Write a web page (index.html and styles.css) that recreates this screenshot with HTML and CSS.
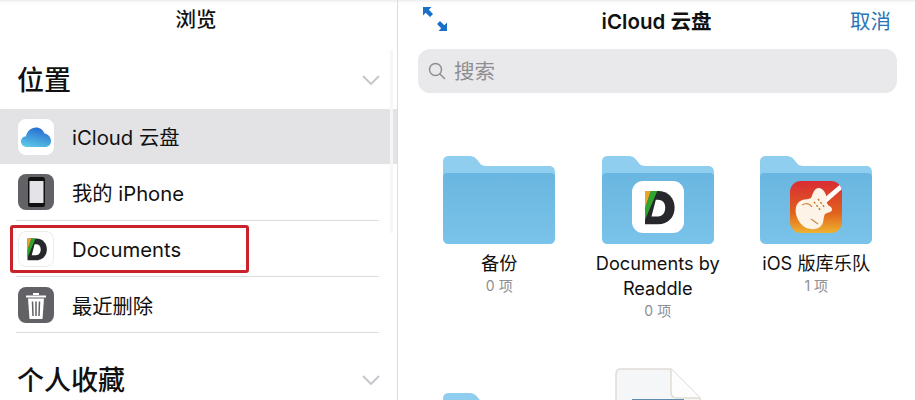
FILE: index.html
```html
<!DOCTYPE html>
<html lang="zh-CN">
<head>
    <meta charset="UTF-8">
    <title>iCloud 云盘</title>
    <link rel="stylesheet" href="styles.css">
</head>
<body>
    <svg class="defs" width="0" height="0">
        <defs>
            <linearGradient id="cloud-grad" x1="0.700" y1="0" x2="0.300" y2="1">
                <stop offset="0" stop-color="#2468cf"/>
                <stop offset="1" stop-color="#5cc6e6"/>
            </linearGradient>
            <linearGradient id="folder-front" x1="0" y1="0" x2="0" y2="1">
                <stop offset="0" stop-color="#69b6e0"/>
                <stop offset="1" stop-color="#7ac3ea"/>
            </linearGradient>
            <symbol id="folder" viewBox="0 0 112 88">
                <path d="M6 0H26C31 0 33 2 36 6C38 9 40 10 44 10H106C110 10 112 12 112 17V40H0V6C0 2 2 0 6 0Z" fill="#90cef0"/>
                <path d="M0 21C0 18 2 17 5 17H107C110 17 112 18 112 21V82C112 86 110 88 106 88H6C2 88 0 86 0 82Z" fill="url(#folder-front)"/>
            </symbol>
            <symbol id="doc-logo" viewBox="0 0 36 36">
                <path d="M9 7H18C25 7 29.500 12 29.500 18.500C29.500 25 25 30 18 30H9Z" fill="#26282b"/>
                <path d="M16.500 13H18C21 13 23 15 23 18.500C23 22 21 24.500 18 24.500H13.500Z" fill="#fff"/>
                <path d="M13 7H17.500L9 27V19Z" fill="#2ea52e"/>
                <path d="M9 7H13L9 19Z" fill="#e9a62c"/>
            </symbol>
        </defs>
    </svg>

    <div class="page">
        <aside class="sidebar">
            <header class="nav-title">浏览</header>

            <div class="section-head">
                <h2>位置</h2>
                <svg class="chevron" width="18" height="10" viewBox="0 0 18 10"><path d="M1 1L9 9L17 1"/></svg>
            </div>

            <ul class="places">
                <li class="place selected">
                    <span class="app-icon white">
                        <svg width="30" height="20" viewBox="0 0 30 20"><path d="M6 20C2.500 20 0 17.500 0 14.500C0 11.500 2.200 9.300 5 9.200C6 4 10 0.500 15 0.500C19 0.500 22 2.800 23.500 6.500C27.500 7 30 10.500 30 14C30 17.500 27.500 20 24 20Z" fill="url(#cloud-grad)"/></svg>
                    </span>
                    <span class="place-name">iCloud 云盘</span>
                </li>
                <li class="place phone">
                    <span class="app-icon grey">
                        <svg width="17" height="30" viewBox="0 0 17 30"><rect width="17" height="30" rx="2.500" fill="#111"/><rect x="1.500" y="4" width="14" height="22" fill="#e4e4e8"/></svg>
                    </span>
                    <span class="place-name">我的 iPhone</span>
                </li>
                <li class="place">
                    <span class="app-icon white outlined">
                        <svg width="36" height="36"><use href="#doc-logo"/></svg>
                    </span>
                    <span class="place-name">Documents</span>
                </li>
                <li class="place">
                    <span class="app-icon grey">
                        <svg width="20" height="27" viewBox="0 0 20 27">
                            <path d="M0 3.500H20V5.500H0ZM7 1H13V3H7Z" fill="#fff"/>
                            <path d="M2 6.500H18L16.500 27H3.500Z" fill="#fff"/>
                            <path d="M6.500 9.500L7 24M10 9.500V24M13.500 9.500L13 24" stroke="#626266" stroke-width="1.500"/>
                        </svg>
                    </span>
                    <span class="place-name">最近删除</span>
                </li>
                <li class="highlight-box"></li>
            </ul>

            <div class="section-head favourites">
                <h2>个人收藏</h2>
                <svg class="chevron" width="18" height="10" viewBox="0 0 18 10"><path d="M1 1L9 9L17 1"/></svg>
            </div>

            <span class="scrollbar"></span>
        </aside>

        <main class="content">
            <header class="topbar">
                <svg class="expand" width="26" height="26" viewBox="0 0 26 26">
                    <path d="M1 1H9.500L6.800 3.700L11 8L8 11L3.700 6.800L1 9.500Z"/>
                    <path d="M25 25H16.500L19.200 22.300L15 18L18 15L22.300 19.200L25 16.500Z"/>
                </svg>
                <span class="title">iCloud 云盘</span>
                <span class="cancel">取消</span>
            </header>

            <div class="search">
                <svg width="18" height="18" viewBox="0 0 18 18"><circle cx="7.500" cy="7.500" r="6"/><path d="M12 12L17 17"/></svg>
                <span class="search-text">搜索</span>
            </div>

            <div class="grid">
                <div class="item">
                    <svg class="folder" width="112" height="88"><use href="#folder"/></svg>
                    <div class="name">备份</div>
                    <div class="count">0 项</div>
                </div>
                <div class="item">
                    <div class="folder-wrap">
                        <svg class="folder" width="112" height="88"><use href="#folder"/></svg>
                        <span class="badge white">
                            <svg width="52" height="52"><use href="#doc-logo"/></svg>
                        </span>
                    </div>
                    <div class="name">Documents by Readdle</div>
                    <div class="count">0 项</div>
                </div>
                <div class="item">
                    <div class="folder-wrap">
                        <svg class="folder" width="112" height="88"><use href="#folder"/></svg>
                        <span class="badge guitar">
                            <svg width="52" height="52" viewBox="0 0 52 52">
                                <path d="M52 2L33 18L36 22L52 8Z" fill="#fff"/>
                                <path d="M29 7C24 7 23 13 21 17C18 19 12 17 8 22C4 27 5 36 11 43C16 49 26 50 31 45C34 42 33 37 35 33C38 31 42 32 42 28C42 26 39 25 38 24L36 20L37 18C36 12 33 7 29 7Z" fill="#fdf3e6"/>
                                <path d="M24 21L31 30M28 18L35 27" stroke="#c8792c" stroke-width="1.500" stroke-dasharray="2 2"/>
                                <path d="M12 24C17 21 20 23 22 26M21 38L28 43" fill="none" stroke="#d08a4a" stroke-width="1.200"/>
                            </svg>
                        </span>
                    </div>
                    <div class="name">iOS 版库乐队</div>
                    <div class="count">1 项</div>
                </div>
                <div class="item">
                    <svg class="folder" width="112" height="88"><use href="#folder"/></svg>
                </div>
                <div class="item">
                    <svg class="file" width="86" height="100" viewBox="0 0 86 100">
                        <path d="M6 1H56L85 30V94C85 97 83 99 80 99H6C3 99 1 97 1 94V6C1 3 3 1 6 1Z" fill="#f5f6f8" stroke="#dfdcd8" stroke-width="1.500"/>
                        <path d="M56 1V24C56 28 58 30 62 30H85" fill="#fdfdfd" stroke="#e2ddd2" stroke-width="1.500"/>
                        <rect x="17" y="31" width="52" height="40" fill="#5f8db0"/>
                    </svg>
                </div>
            </div>
        </main>
    </div>
</body>
</html>
```

FILE: styles.css
```css
* {
    box-sizing: border-box;
}
body {
    margin: 0;
    background: #fff;
    color: #111;
    font-family: Inter, "Noto Sans CJK SC", sans-serif;
}
.defs {
    display: block;
    height: 0;
}
.page {
    display: flex;
    width: 915px;
    height: 400px;
    overflow: hidden;
    box-shadow: inset 0 3px 3px -2px #e6e6e6;
}

/* left column */
.sidebar {
    position: relative;
    flex: none;
    width: 398px;
    border-right: 1px solid #dcdcde;
}
.nav-title {
    height: 49px;
    padding: 5px 5px 0 0;
    text-align: center;
    font-size: 20.500px;
    line-height: 30px;
    font-weight: 500;
}
.section-head {
    display: flex;
    align-items: center;
    justify-content: space-between;
    height: 60px;
    padding: 0 17px 2px 17px;
}
.section-head h2 {
    margin: 0;
    font-size: 27px;
    font-weight: 500;
}
.favourites {
    margin-top: 16px;
}
.chevron {
    margin-top: 4px;
    fill: none;
    stroke: #c7c7cc;
    stroke-width: 2;
}
.places {
    position: relative;
    list-style: none;
    margin: 0;
    padding: 0;
}
.place {
    position: relative;
    display: flex;
    align-items: center;
    gap: 18px;
    height: 56px;
    padding-left: 18px;
}
.place::after {
    content: "";
    position: absolute;
    left: 16px;
    right: 18px;
    bottom: 0;
    height: 1px;
    background: #dcdcde;
}
.place.selected {
    height: 55px;
    margin-bottom: 1px;
    background: #e3e3e5;
}
.place.selected::after {
    display: none;
}
.place.selected .place-name {
    margin-top: -2px;
}
.place.phone {
    padding-bottom: 2px;
}
.place-name {
    font-size: 20.300px;
}
.app-icon {
    display: flex;
    flex: none;
    align-items: center;
    justify-content: center;
    width: 36px;
    height: 36px;
    border-radius: 8px;
}
.app-icon.white {
    background: #fff;
}
.app-icon.grey {
    background: #626266;
}
.app-icon.outlined {
    border: 1px solid #ececec;
}
.highlight-box {
    position: absolute;
    left: 10px;
    top: 116px;
    width: 239px;
    height: 48px;
    border: 3px solid #c9222b;
    border-radius: 3px;
}
.scrollbar {
    position: absolute;
    right: 4px;
    top: 50px;
    width: 3px;
    height: 183px;
    border-radius: 2px;
    background: #f6f6f7;
}

/* right column */
.content {
    flex: 1;
    min-width: 0;
}
.topbar {
    display: grid;
    grid-template-columns: 1fr auto 1fr;
    align-items: center;
    height: 49px;
    padding: 0 24px 9px 24px;
}
.expand {
    margin-top: -2px;
    fill: #1a6fc9;
}
.title {
    font-size: 20.500px;
    font-weight: 600;
}
.cancel {
    text-align: right;
    font-size: 20.500px;
    color: #2a74b8;
}
.search {
    display: flex;
    align-items: center;
    gap: 8px;
    height: 44px;
    margin: 0 18px 0 20px;
    padding-left: 10px;
    border-radius: 12px;
    background: #e9e9eb;
    color: #8e8e93;
    font-size: 20.500px;
}
.search svg {
    fill: none;
    stroke: #8e8e93;
    stroke-width: 1.500;
}
.search-text {
    margin-top: -3px;
}
.grid {
    display: grid;
    grid-template-columns: repeat(3, 158.500px);
    row-gap: 73px;
    margin-top: 63px;
    padding-left: 22px;
}
.item {
    display: flex;
    flex-direction: column;
    align-items: center;
    text-align: center;
}
.folder,
.file {
    display: block;
}
.file {
    margin-top: -25px;
}
.folder-wrap {
    position: relative;
}
.badge {
    position: absolute;
    left: 30px;
    top: 25px;
    display: flex;
    width: 52px;
    height: 52px;
    border-radius: 11px;
    overflow: hidden;
}
.badge.white {
    background: #fff;
}
.badge.guitar {
    background: linear-gradient(#d92c35, #e0601c 60%, #eeb22f);
}
.name {
    width: 132px;
    margin-top: 7px;
    font-size: 18.200px;
    line-height: 25px;
}
.count {
    font-size: 14px;
    line-height: 19px;
    color: #8e8e93;
}
```
